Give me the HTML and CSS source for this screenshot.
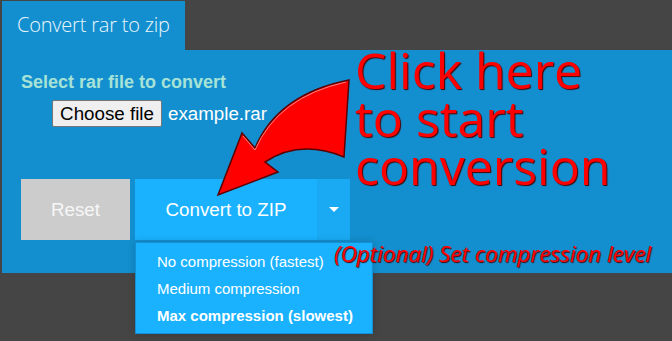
FILE: index.html
```html
<!DOCTYPE html>
<html>
<head>
<meta charset="utf-8">
<link rel="stylesheet" href="styles.css">
</head>
<body>
<div class="app">
  <div class="tab">Convert rar to zip</div>
  <div class="panel">
    <div class="label">Select rar file to convert</div>
    <div class="file-row">
      <button class="file-btn">Choose file</button>
      <span class="file-name">example.rar</span>
    </div>
    <div class="actions">
      <button class="btn-reset">Reset</button>
      <div class="btn-group">
        <button class="btn-convert">Convert to ZIP</button>
        <button class="btn-toggle"><span class="caret"></span></button>
        <ul class="menu">
          <li>No compression (fastest)</li>
          <li>Medium compression</li>
          <li class="selected">Max compression (slowest)</li>
        </ul>
      </div>
    </div>
  </div>
  <svg class="arrow" width="672" height="341" viewBox="0 0 672 341">
    <path d="M349,80 L344,157 Q300,139 265,162 L278,172 L218,195 L242,133 L255,148 Q278,94 349,80 Z" fill="#ff0000" stroke="#5a0000" stroke-width="1.5" stroke-linejoin="miter"/>
    <path d="M243,136 L255,150 Q278,97 346,82" fill="none" stroke="#ff8080" stroke-width="1"/>
  </svg>
  <div class="callout">Click here<br>to start<br>conversion</div>
  <div class="note">(Optional) Set compression level</div>
</div>
</body>
</html>
```
FILE: styles.css
```css
* { box-sizing: border-box; }
html, body { margin: 0; padding: 0; }
body {
  background: #454545;
  width: 672px;
  height: 341px;
  overflow: hidden;
  font-family: "Liberation Sans", Arial, sans-serif;
}
.app {
  position: relative;
  padding: 1px 0 0 2px;
  height: 341px;
}
.tab {
  width: 183px;
  height: 49px;
  background: #138fcf;
  color: #eaf6fc;
  font-family: "Open Sans", sans-serif;
  font-weight: 300;
  font-size: 20px;
  letter-spacing: -0.2px;
  line-height: 28px;
  padding: 10px 0 0 15px;
  white-space: nowrap;
}
.panel {
  background: #138fcf;
  height: 223px;
  padding: 22px 0 0 19px;
}
.label {
  color: #a6e2d6;
  font-weight: bold;
  font-size: 18px;
  line-height: 20px;
}
.file-row {
  margin-top: 8px;
  padding-left: 31px;
  display: flex;
  align-items: center;
  gap: 6px;
  height: 27px;
}
.file-btn {
  height: 27px;
  width: 110px;
  padding: 0;
  background: #efefef;
  border: 1px solid #767676;
  border-radius: 2px;
  font-family: "Liberation Sans", Arial, sans-serif;
  font-size: 18.75px;
  color: #000;
}
.file-name {
  color: #fff;
  font-size: 18.75px;
}
.actions {
  margin-top: 52px;
  display: flex;
  gap: 5px;
}
button { cursor: pointer; }
.btn-reset {
  width: 109px;
  height: 61px;
  background: #cccccc;
  border: none;
  color: #f7f7f7;
  font-family: "Liberation Sans", Arial, sans-serif;
  font-size: 18.75px;
  padding: 0;
}
.btn-group {
  position: relative;
  display: flex;
}
.btn-convert {
  width: 182px;
  height: 61px;
  background: #1ab2ff;
  border: none;
  color: #ffffff;
  font-family: "Liberation Sans", Arial, sans-serif;
  font-size: 18.75px;
  padding: 0;
}
.btn-toggle {
  width: 33px;
  height: 61px;
  background: #19aaf3;
  border: none;
  padding: 0;
  display: flex;
  align-items: center;
  justify-content: center;
}
.caret {
  width: 0;
  height: 0;
  border-left: 5px solid transparent;
  border-right: 5px solid transparent;
  border-top: 5px solid #fff;
}
.menu {
  position: absolute;
  left: 0;
  top: 63px;
  width: 238px;
  margin: 0;
  padding: 5px 0 4px;
  list-style: none;
  background: #1ab2ff;
  border: 1px solid #1590d4;
  box-shadow: 0 0 8px rgba(0, 0, 0, 0.18);
  z-index: 2;
}
.menu li {
  padding-left: 21px;
  line-height: 27px;
  font-size: 15px;
  color: #ffffff;
  white-space: nowrap;
}
.menu li.selected { font-weight: bold; }
.arrow {
  position: absolute;
  left: 0;
  top: 0;
  pointer-events: none;
  z-index: 3;
}
.callout {
  position: absolute;
  left: 355px;
  top: 46px;
  font-family: "Open Sans", sans-serif;
  font-size: 50px;
  line-height: 48px;
  color: #ff0000;
  text-shadow: 1px 1px 1px #4a0000;
  white-space: nowrap;
  z-index: 3;
}
.note {
  position: absolute;
  left: 334px;
  top: 241px;
  font-family: "Open Sans", sans-serif;
  font-style: italic;
  font-size: 22.5px;
  line-height: 26px;
  color: #ff0000;
  text-shadow: 1px 1px 1px #4a0000;
  white-space: nowrap;
  z-index: 3;
}
```
